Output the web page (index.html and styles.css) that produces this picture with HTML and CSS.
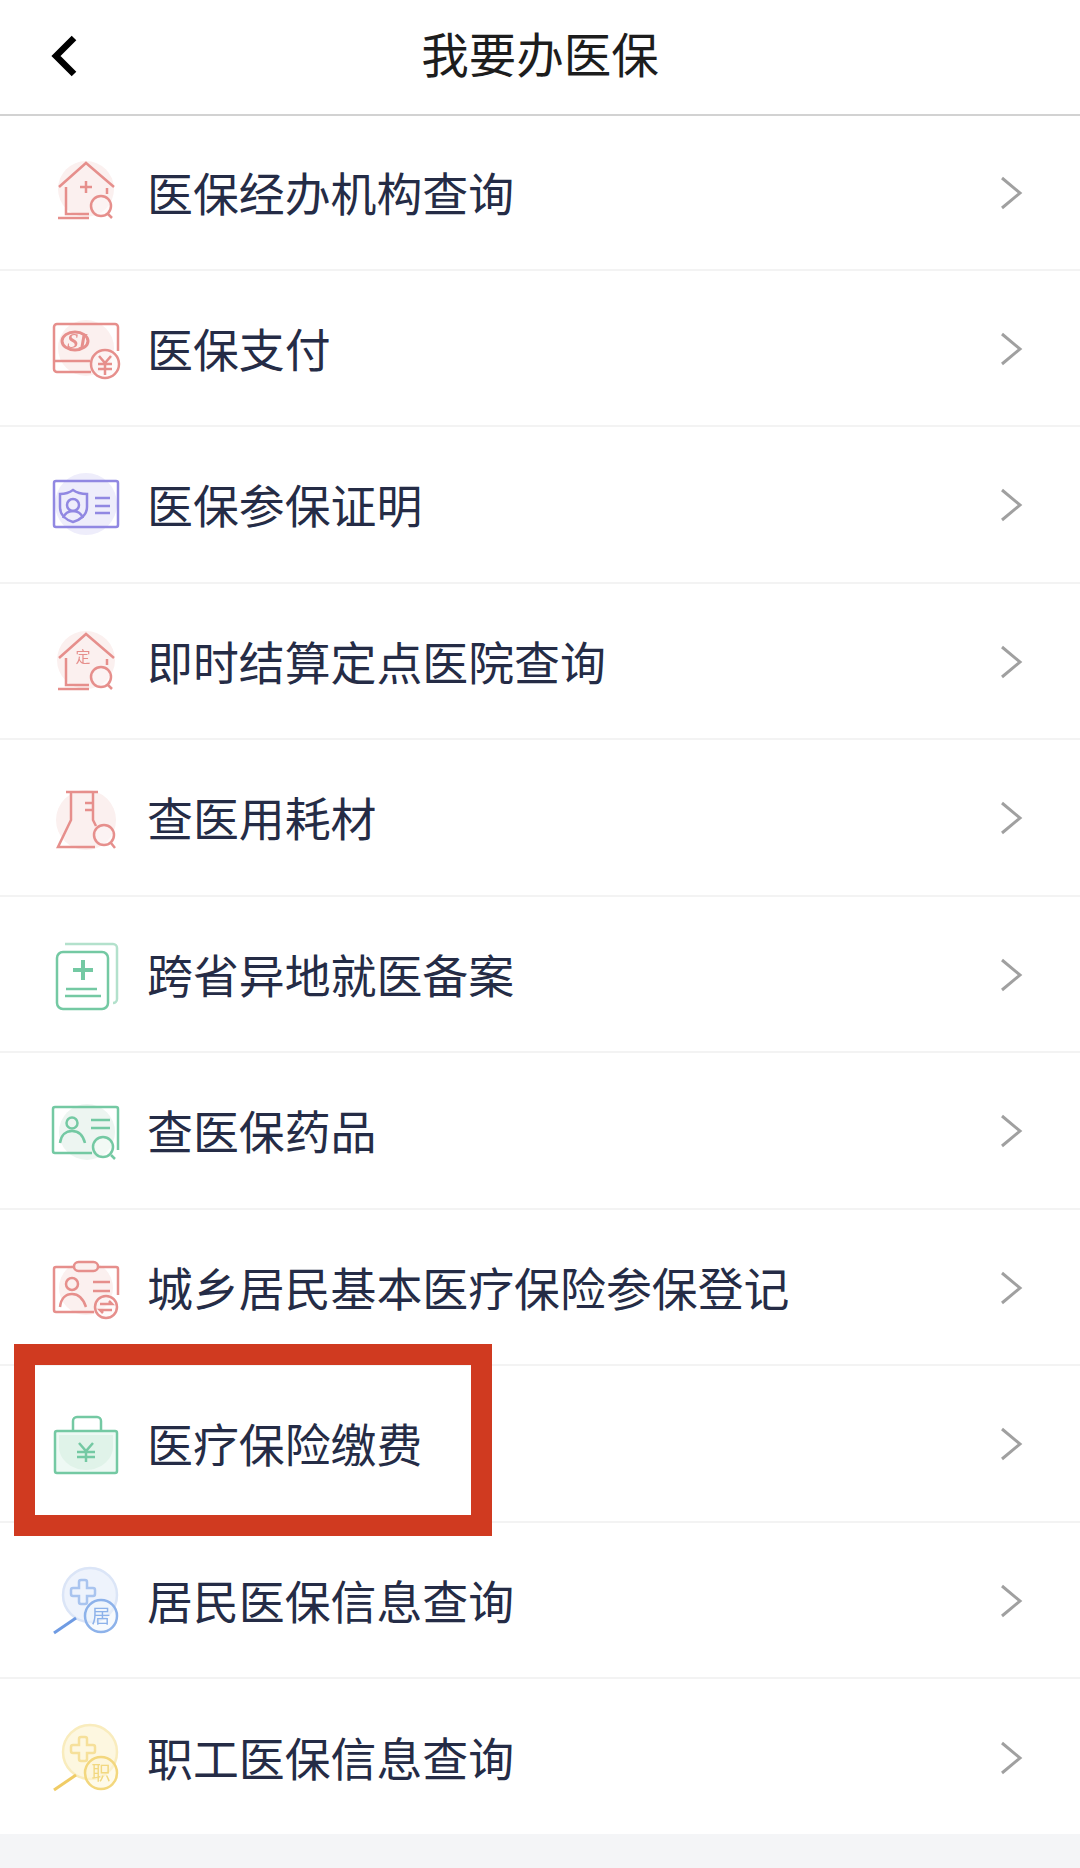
FILE: index.html
```html
<!DOCTYPE html>
<html lang="zh-CN">
<head>
<meta charset="utf-8">
<title>我要办医保</title>
<link rel="stylesheet" href="styles.css">
</head>
<body>
<div class="page">
  <header class="topbar">
    <svg class="back" viewBox="0 0 30 44"><path d="M24 4 6 22l18 18"/></svg>
    <h1 class="title">我要办医保</h1>
    <span></span>
  </header>
  <ul class="list">
    <li class="row">
      <svg class="ico red" viewBox="0 0 70 70"><circle class="bg" cx="36" cy="32" r="28"/><path d="M9 30 36 6l28 24M16 30v27h23M8 61h31M30 30h12M36 24v12M57 31v6M58 57l4 4"/><circle class="knock" cx="51" cy="49" r="10"/></svg>
      <span class="label">医保经办机构查询</span>
      <svg class="chev" viewBox="0 0 24 36"><path d="M3 3l18 15L3 33"/></svg>
    </li>
    <li class="row">
      <svg class="ico red" viewBox="0 0 70 70"><circle class="bg" cx="36" cy="35" r="28"/><path d="M41 59H7a3 3 0 0 1-3-3V14a3 3 0 0 1 3-3h58a3 3 0 0 1 3 3v24M4 48h36"/><ellipse class="oval" cx="25" cy="28" rx="13" ry="9"/><text class="si" x="27" y="35">SI</text><circle class="knock" cx="55" cy="51" r="14"/><path d="M49 43l6 7 6-7M48 51h14M48 56h14M55 50v12"/></svg>
      <span class="label">医保支付</span>
      <svg class="chev" viewBox="0 0 24 36"><path d="M3 3l18 15L3 33"/></svg>
    </li>
    <li class="row">
      <svg class="ico violet" viewBox="0 0 70 70"><circle class="bg" cx="36" cy="35" r="31"/><rect x="4" y="12" width="64" height="46" rx="2"/><path d="M23 21c4 3 9 4 14 4v13c0 8-7 13-14 15-7-2-13-7-13-15V25c5 0 9-1 13-4z"/><circle cx="23" cy="36" r="6"/><path d="M13 49c2-5 6-7 10-7s8 2 10 7M45 29h15M45 37h15M45 44h15"/></svg>
      <span class="label">医保参保证明</span>
      <svg class="chev" viewBox="0 0 24 36"><path d="M3 3l18 15L3 33"/></svg>
    </li>
    <li class="row">
      <svg class="ico red" viewBox="0 0 70 70"><circle class="bg" cx="36" cy="34" r="29"/><path d="M9 32 36 8l28 24M16 32v27h23M8 63h31M57 33v6M58 59l4 4"/><text class="mini" x="33" y="36">定</text><circle class="knock" cx="51" cy="51" r="10"/></svg>
      <span class="label">即时结算定点医院查询</span>
      <svg class="chev" viewBox="0 0 24 36"><path d="M3 3l18 15L3 33"/></svg>
    </li>
    <li class="row">
      <svg class="ico red" viewBox="0 0 70 70"><circle class="bg" cx="36" cy="38" r="30"/><path d="M16 10h32M21 10v28L8 65h37M43 10v28l3 6M35 21h8M35 28h8M61 61l4 5"/><circle class="knock" cx="54" cy="53" r="10"/></svg>
      <span class="label">查医用耗材</span>
      <svg class="chev" viewBox="0 0 24 36"><path d="M3 3l18 15L3 33"/></svg>
    </li>
    <li class="row">
      <svg class="ico green" viewBox="0 0 70 70"><path class="faint" d="M15 5h48a4 4 0 0 1 4 4v51a4 4 0 0 1-4 4"/><rect x="7" y="13" width="51" height="57" rx="6"/><path class="thick" d="M33 21v20M23 31h20"/><path d="M16 50h31M15 57h36"/></svg>
      <span class="label">跨省异地就医备案</span>
      <svg class="chev" viewBox="0 0 24 36"><path d="M3 3l18 15L3 33"/></svg>
    </li>
    <li class="row">
      <svg class="ico green" viewBox="0 0 70 70"><circle class="bg" cx="37" cy="37" r="28"/><path d="M42 58H5a2 2 0 0 1-2-2V14a2 2 0 0 1 2-2h61a2 2 0 0 1 2 2v41"/><circle cx="22" cy="28" r="5.500"/><path d="M10 48c1-8 6-12 12-12s11 4 13 12M41 25h19M41 33h19M61 60l4 4"/><circle class="knock" cx="53" cy="52" r="10"/></svg>
      <span class="label">查医保药品</span>
      <svg class="chev" viewBox="0 0 24 36"><path d="M3 3l18 15L3 33"/></svg>
    </li>
    <li class="row">
      <svg class="ico red" viewBox="0 0 70 70"><circle class="bg" cx="36" cy="36" r="27"/><path d="M24 15H6a2 2 0 0 0-2 2v41a2 2 0 0 0 2 2h38M48 15h18a2 2 0 0 1 2 2v26"/><rect x="24" y="10" width="24" height="9" rx="4.500"/><circle cx="22" cy="32" r="6"/><path d="M10 55c1-9 6-13 12-13s11 4 14 13M43 30h17M43 39h17"/><circle class="knock" cx="56" cy="55" r="11"/><path d="M50 52h12l-3-3M62 58H50l3 3"/></svg>
      <span class="label">城乡居民基本医疗保险参保登记</span>
      <svg class="chev" viewBox="0 0 24 36"><path d="M3 3l18 15L3 33"/></svg>
    </li>
    <li class="row">
      <svg class="ico green" viewBox="0 -2 70 70"><rect class="tint" x="5" y="21" width="62" height="42" rx="2"/><path class="shade" d="M9 25h54v12c0 12-12 23-27 23S9 49 9 37z"/><path d="M23 21V11a4 4 0 0 1 4-4h20a4 4 0 0 1 4 4v10M29 33l7 8 7-8M27 42h18M27 47h18M36 41v11"/></svg>
      <span class="label">医疗保险缴费</span>
      <svg class="chev" viewBox="0 0 24 36"><path d="M3 3l18 15L3 33"/></svg>
      <div class="callout"></div>
    </li>
    <li class="row">
      <svg class="ico blue" viewBox="0 -3 70 70"><circle class="tint" cx="40" cy="27" r="27"/><path class="cross" d="M29 14a2 2 0 0 1 2-2h4a2 2 0 0 1 2 2v6h6a2 2 0 0 1 2 2v4a2 2 0 0 1-2 2h-6v6a2 2 0 0 1-2 2h-4a2 2 0 0 1-2-2v-6h-6a2 2 0 0 1-2-2v-4a2 2 0 0 1 2-2h6z"/><path class="handle" d="M26 50 4 65"/><circle class="knock" cx="51" cy="48" r="16"/><text class="mini big" x="51" y="55">居</text></svg>
      <span class="label">居民医保信息查询</span>
      <svg class="chev" viewBox="0 0 24 36"><path d="M3 3l18 15L3 33"/></svg>
    </li>
    <li class="row">
      <svg class="ico yellow" viewBox="0 -3 70 70"><circle class="tint" cx="40" cy="27" r="27"/><path class="cross" d="M29 14a2 2 0 0 1 2-2h4a2 2 0 0 1 2 2v6h6a2 2 0 0 1 2 2v4a2 2 0 0 1-2 2h-6v6a2 2 0 0 1-2 2h-4a2 2 0 0 1-2-2v-6h-6a2 2 0 0 1-2-2v-4a2 2 0 0 1 2-2h6z"/><path class="handle" d="M26 50 4 65"/><circle class="knock" cx="51" cy="48" r="16"/><text class="mini big" x="51" y="55">职</text></svg>
      <span class="label">职工医保信息查询</span>
      <svg class="chev" viewBox="0 0 24 36"><path d="M3 3l18 15L3 33"/></svg>
    </li>
  </ul>
  <div class="foot"></div>
</div>
</body>
</html>
```

FILE: styles.css
```css
* { box-sizing: border-box; }
html, body { margin: 0; padding: 0; background: #fff; }
.page {
  width: 1080px;
  height: 1868px;
  display: flex;
  flex-direction: column;
  font-family: "Noto Sans CJK SC", "Noto Sans", sans-serif;
}
.topbar {
  height: 116px;
  flex: none;
  display: grid;
  grid-template-columns: 1fr auto 1fr;
  align-items: center;
  padding: 0 50px 3px;
  border-bottom: 2px solid #d2d2d2;
}
.back { width: 30px; height: 44px; }
.back path { fill: none; stroke: #000; stroke-width: 6.5; }
.title {
  margin: 0 0 6px;
  font-size: 47.500px;
  font-weight: 400;
  line-height: 60px;
  color: #1d1d1d;
}
.list {
  list-style: none;
  margin: 0;
  padding: 0;
  height: 1718px;
  flex: none;
  display: grid;
  grid-template-rows: 154.500px repeat(9, 156.500px) 1fr;
}
.row {
  position: relative;
  display: flex;
  align-items: center;
  gap: 27px;
  padding: 0 50px;
  border-bottom: 2px solid #f3f3f3;
}
.row:last-child { border-bottom: 0; }
.label {
  flex: 1;
  font-size: 45.900px;
  line-height: 60px;
  padding-bottom: 2px;
  color: #252c46;
}
.chev { width: 24px; height: 36px; margin: 2px 7px 0 0; }
.chev path { fill: none; stroke: #a0a0a0; stroke-width: 3; }
.foot { flex: 1; background: #f4f5f7; }
.callout {
  position: absolute;
  left: 14px;
  top: -22px;
  width: 478px;
  height: 192px;
  border: 21px solid #d03a20;
}

.ico { width: 70px; height: 70px; flex: none; overflow: visible; filter: blur(0.4px); }
.ico * { fill: none; stroke-width: 2.500; }
.ico .bg { stroke: none; }
.ico .knock { fill-opacity: 0.55; }
.ico text { stroke: none; font-family: "Noto Sans CJK SC", sans-serif; text-anchor: middle; }
.ico .mini { font-size: 15px; }
.ico .mini.big { font-size: 19px; }
.ico .si { font-size: 21px; font-weight: 700; font-style: italic; font-family: "Liberation Serif", serif; }
.ico .oval { stroke-width: 3; }
.ico .thick { stroke-width: 4; }
.ico .faint { stroke-opacity: 0.55; }
.ico .shade { stroke: none; }
.ico .handle { stroke-width: 3; }

.red * { stroke: #e68f8c; }
.red .bg { fill: #fbf0ef; }
.red .knock { fill: #fdf6f6; }
.red text { fill: #e68f8c; }
.violet * { stroke: #9188e2; }
.violet .bg { fill: #eeedfb; }
.green * { stroke: #74c9a3; }
.green .bg { fill: #edf5f1; }
.green .knock { fill: #f6fbf8; }
.green .tint { fill: #eef9f4; }
.green .shade { fill: #e0f3e9; }
.blue * { stroke: #8db2ea; }
.blue .tint { fill: #eef3fc; stroke: #dbe5f7; }
.blue .cross { stroke: #a9c4ef; }
.blue .handle { stroke: #6f9be3; }
.blue .knock { fill: #f0f5fc; }
.blue text { fill: #8db2ea; }
.yellow * { stroke: #f3d77e; }
.yellow .tint { fill: #fdf7e0; stroke: #f9ecbd; }
.yellow .cross { stroke: #f6e09a; }
.yellow .handle { stroke: #f0cc66; }
.yellow .knock { fill: #fdf6d8; }
.yellow text { fill: #f2d880; }
```
